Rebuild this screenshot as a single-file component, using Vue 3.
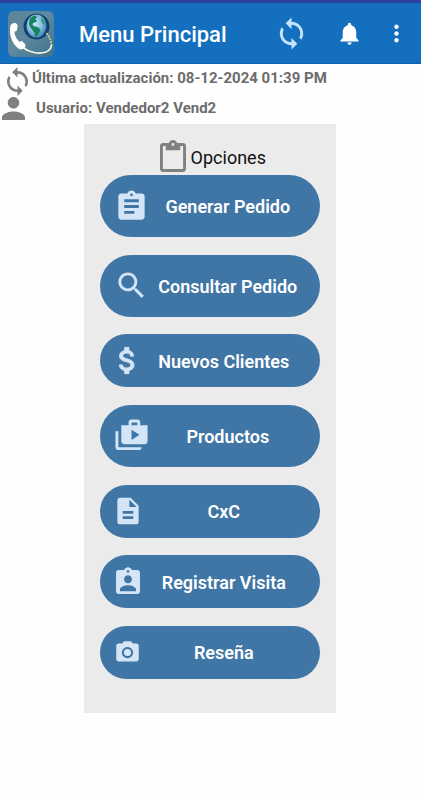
<script setup>
const syncPath =
  'M12 4V1L8 5l4 4V6c3.31 0 6 2.69 6 6 0 1.01-.25 1.97-.7 2.8l1.46 1.46C19.54 15.03 20 13.57 20 12c0-4.42-3.58-8-8-8zm0 14c-3.31 0-6-2.69-6-6 0-1.01.25-1.97.7-2.8L5.24 7.74C4.46 8.97 4 10.43 4 12c0 4.42 3.58 8 8 8v3l4-4-4-4v3z'

const options = [
  {
    label: 'Generar Pedido',
    tall: true,
    icon: 'i35',
    d: 'M19 3h-4.18C14.4 1.84 13.3 1 12 1c-1.3 0-2.4.84-2.82 2H5c-1.1 0-2 .9-2 2v14c0 1.1.9 2 2 2h14c1.1 0 2-.9 2-2V5c0-1.1-.9-2-2-2zm-7 0c.55 0 1 .45 1 1s-.45 1-1 1-1-.45-1-1 .45-1 1-1zm2 14H7v-2h7v2zm3-4H7v-2h10v2zm0-4H7V7h10v2z',
  },
  {
    label: 'Consultar Pedido',
    tall: true,
    icon: 'i35',
    d: 'M15.5 14h-.79l-.28-.27C15.41 12.59 16 11.11 16 9.5 16 5.91 13.09 3 9.5 3S3 5.91 3 9.5 5.91 16 9.5 16c1.61 0 3.09-.59 4.23-1.57l.27.28v.79l5 4.99L20.49 19l-4.99-5zm-6 0C7.01 14 5 11.99 5 9.5S7.01 5 9.5 5 14 7.01 14 9.5 11.99 14 9.5 14z',
  },
  {
    label: 'Nuevos Clientes',
    icon: 'i35 bold',
    d: 'M11.8 10.9c-2.27-.59-3-1.2-3-2.15 0-1.09 1.01-1.85 2.7-1.85 1.78 0 2.44.85 2.5 2.1h2.21c-.07-1.72-1.12-3.3-3.21-3.81V3h-3v2.16c-1.94.42-3.5 1.68-3.5 3.61 0 2.31 1.91 3.46 4.7 4.13 2.5.6 3 1.48 3 2.41 0 .69-.49 1.79-2.7 1.79-2.06 0-2.87-.92-2.98-2.1h-2.2c.12 2.19 1.76 3.42 3.68 3.83V21h3v-2.15c1.95-.37 3.5-1.5 3.5-3.55 0-2.84-2.43-3.81-4.7-4.4z',
  },
  {
    label: 'Productos',
    tall: true,
    icon: 'i35',
    d: 'M3 9H1v11c0 1.11.89 2 2 2h14c1.11 0 2-.89 2-2H3V9zm15-4V3c0-1.11-.89-2-2-2h-4c-1.11 0-2 .89-2 2v2H5v11c0 1.11.89 2 2 2h14c1.11 0 2-.89 2-2V5h-5zm-6-2h4v2h-4V3zm0 12V8l5.5 3.5L12 15z',
  },
  {
    label: 'CxC',
    icon: 'i32',
    d: 'M14 2H6c-1.1 0-1.99.9-1.99 2L4 20c0 1.1.89 2 1.99 2H18c1.1 0 2-.9 2-2V8l-6-6zm2 16H8v-2h8v2zm0-4H8v-2h8v2zm-3-5V3.5L18.5 9H13z',
  },
  {
    label: 'Registrar Visita',
    icon: 'i32',
    d: 'M19 3h-4.18C14.4 1.84 13.3 1 12 1c-1.3 0-2.4.84-2.82 2H5c-1.1 0-2 .9-2 2v14c0 1.1.9 2 2 2h14c1.1 0 2-.9 2-2V5c0-1.1-.9-2-2-2zm-7 0c.55 0 1 .45 1 1s-.45 1-1 1-1-.45-1-1 .45-1 1-1zm0 4c1.66 0 3 1.34 3 3s-1.34 3-3 3-3-1.34-3-3 1.34-3 3-3zm6 12H6v-1.4c0-2 4-3.1 6-3.1s6 1.1 6 3.1V19z',
  },
  {
    label: 'Reseña',
    icon: 'i27',
    d: 'M12 8.8a3.2 3.2 0 1 0 0 6.4 3.2 3.2 0 0 0 0-6.4zM9 2L7.17 4H4c-1.1 0-2 .9-2 2v12c0 1.1.9 2 2 2h16c1.1 0 2-.9 2-2V6c0-1.1-.9-2-2-2h-3.17L15 2H9zm3 15c-2.76 0-5-2.24-5-5s2.24-5 5-5 5 2.24 5 5-2.24 5-5 5z',
  },
]
</script>

<template>
  <div class="screen">
    <header class="bar">
      <svg class="logo" viewBox="0 0 46 46" aria-hidden="true">
        <defs>
          <linearGradient id="tile" x1="0" y1="0" x2="1" y2="1">
            <stop offset="0" stop-color="#5c8799" />
            <stop offset="0.5" stop-color="#5d889d" />
            <stop offset="1" stop-color="#3f728e" />
          </linearGradient>
          <radialGradient id="sea" cx="0.4" cy="0.4" r="0.65">
            <stop offset="0" stop-color="#c9e6f4" />
            <stop offset="0.6" stop-color="#7fbce0" />
            <stop offset="1" stop-color="#3a7cb8" />
          </radialGradient>
        </defs>
        <rect width="46" height="46" rx="6" fill="url(#tile)" />
        <circle cx="28.5" cy="15.5" r="13" fill="#123f6f" />
        <ellipse cx="28.500" cy="15" rx="10" ry="11.500" fill="url(#sea)" />
        <path d="M21.500 8.500q2-3.500 6-4l1.500 1.500-2 2.500 2 .5-1 2-3 1-.5 2 2 1.500 3 .5 3 2.500-1 3-2.500 3.500-1.500 1-1-4-2-3-2-2.500-1.500-3z" fill="#16845e" />
        <path d="M33.500 6l3 4 .5 4-2.500-1-1.500-3.500z" fill="#3a9a80" />
        <path d="M38.500 22q5 7 5 13" fill="none" stroke="#d8dc96" stroke-width="1.500" stroke-dasharray="2 1" />
        <path d="M14 36C21 41.500 31 43.500 38 41q5-2 5.500-7" fill="none" stroke="#f4f7ea" stroke-width="1.600" />
        <path d="M2.500 14.500q1.500-3 4.500-2.500 3 .5 2.500 3.500l-.5 3.500q-.5 1.500-2.500 1.500c0 4 2.500 8 5 10.500q1.500-1.500 3-.500l2.500 2.500q1.500 2-.5 4-3 2.500-6 .500C4 33 .5 23 2.500 14.500z" fill="#fff" />
      </svg>
      <h1 class="title">Menu Principal</h1>
      <nav class="actions">
        <button class="action" type="button" aria-label="Sincronizar">
          <svg class="i35 pale" viewBox="0 0 24 24"><path :d="syncPath" /></svg>
        </button>
        <button class="action" type="button" aria-label="Notificaciones">
          <svg class="i27" viewBox="0 0 24 24">
            <path d="M12 22c1.1 0 2-.9 2-2h-4c0 1.1.89 2 2 2zm6-6v-5c0-3.070-1.640-5.640-4.500-6.320V4c0-.83-.67-1.500-1.500-1.500s-1.500.67-1.500 1.500v.68C7.630 5.360 6 7.920 6 11v5l-2 2v1h16v-1l-2-2z" />
          </svg>
        </button>
        <button class="action more" type="button" aria-label="Más opciones">
          <svg class="i27" viewBox="0 0 24 24">
            <path d="M12 8c1.100 0 2-.9 2-2s-.9-2-2-2-2 .9-2 2 .9 2 2 2zm0 2c-1.100 0-2 .9-2 2s.9 2 2 2 2-.9 2-2-.9-2-2-2zm0 6c-1.100 0-2 .9-2 2s.9 2 2 2 2-.9 2-2-.9-2-2-2z" />
          </svg>
        </button>
      </nav>
    </header>

    <section class="status">
      <p class="line updated">
        <svg class="sync" viewBox="4 1 16 22" aria-hidden="true"><path :d="syncPath" /></svg>
        <span>Última actualización: 08-12-2024 01:39 PM</span>
      </p>
      <p class="line user">
        <svg class="person" viewBox="4 4 16 16" aria-hidden="true">
          <path d="M12 12c2.210 0 4-1.790 4-4s-1.790-4-4-4-4 1.790-4 4 1.790 4 4 4zm0 2c-2.670 0-8 1.340-8 4v2h16v-2c0-2.660-5.330-4-8-4z" />
        </svg>
        <span>Usuario: Vendedor2 Vend2</span>
      </p>
    </section>

    <main class="panel">
      <h2 class="heading">
        <svg class="clip" viewBox="3 0 18 22" aria-hidden="true">
          <path d="M19 2h-4.180C14.400.84 13.300 0 12 0c-1.300 0-2.400.84-2.820 2H5c-1.100 0-2 .9-2 2v16c0 1.100.9 2 2 2h14c1.100 0 2-.9 2-2V4c0-1.100-.9-2-2-2zm-7 0c.55 0 1 .45 1 1s-.45 1-1 1-1-.45-1-1 .45-1 1-1zm7 18H5V4h2v3h10V4h2v16z" />
        </svg>
        <span>Opciones</span>
      </h2>
      <div class="list">
        <button
          v-for="option in options"
          :key="option.label"
          type="button"
          class="option"
          :class="{ tall: option.tall }"
        >
          <span class="slot">
            <svg :class="option.icon" viewBox="0 0 24 24" aria-hidden="true"><path :d="option.d" /></svg>
          </span>
          <span class="label">{{ option.label }}</span>
        </button>
      </div>
    </main>
  </div>
</template>

<style>
body {
  background: #fefefe;
}
</style>

<style scoped>
.screen {
  font-family: Roboto, 'Liberation Sans', sans-serif;
}
svg {
  display: block;
  flex: none;
  fill: currentColor;
}
button {
  border: 0;
  margin: 0;
  padding: 0;
  font: inherit;
  cursor: pointer;
}
.i35 {
  width: 35px;
  height: 35px;
}
.i32 {
  width: 32px;
  height: 32px;
}
.i27 {
  width: 27px;
  height: 27px;
}
.bold {
  stroke: currentColor;
  stroke-width: 0.6;
}

.bar {
  display: flex;
  align-items: center;
  box-sizing: border-box;
  height: 64px;
  padding: 1px 7px 0 8px;
  border-top: 3px solid #2a3f9f;
  border-bottom: 1px solid #0f62ab;
  background: #146fbf;
  color: #fff;
}
.logo {
  width: 46px;
  height: 46px;
}
.title {
  flex: 1;
  margin: 0 0 0 25px;
  padding-top: 2px;
  font-size: 22px;
  line-height: 26px;
  font-weight: 500;
  white-space: nowrap;
}
.actions {
  display: flex;
  align-items: center;
}
.action {
  display: flex;
  justify-content: center;
  width: 58px;
  background: none;
  color: #fff;
}
.more {
  width: 36px;
}
.pale {
  color: #c5e2fb;
}

.status {
  color: #6c6c6c;
  font-size: 15px;
  line-height: 22px;
  font-weight: 700;
}
.line {
  display: flex;
  align-items: flex-start;
  margin: 0;
  white-space: nowrap;
}
.status svg {
  color: #808080;
}
.updated {
  gap: 4px;
  padding: 3px 0 0 7px;
}
.user {
  align-items: center;
  gap: 11px;
  padding: 1px 0 0 2px;
  line-height: 23px;
}
.sync {
  width: 21px;
  height: 29px;
}
.person {
  width: 23px;
  height: 23px;
}

.panel {
  box-sizing: border-box;
  width: 59.9%;
  margin: 4px 0 0 20%;
  padding: 16px 16px 34px;
  background: #ebebeb;
}
.heading {
  display: flex;
  align-items: center;
  justify-content: center;
  gap: 5px;
  margin: 0 0 3px;
  padding-left: 5px;
  color: #111;
  font-size: 18px;
  line-height: 32px;
  font-weight: 400;
}
.heading span {
  padding-top: 4px;
  line-height: 28px;
}
.clip {
  width: 26px;
  height: 32px;
  color: #808080;
}
.list {
  display: flex;
  flex-direction: column;
  justify-content: space-between;
  min-height: 504px;
}
.option {
  display: flex;
  align-items: center;
  height: 53px;
  padding: 0 14px;
  border-radius: 31px;
  background: #4076a6;
  color: #fff;
  font-size: 18px;
  line-height: 22px;
  font-weight: 600;
}
.tall {
  height: 62px;
}
.slot {
  display: flex;
  justify-content: center;
  flex: none;
  width: 27px;
  color: #d3e5f6;
}
.tall .slot {
  width: 35px;
}
.label {
  flex: 1;
  padding-top: 2px;
  text-align: center;
  white-space: nowrap;
}
</style>
